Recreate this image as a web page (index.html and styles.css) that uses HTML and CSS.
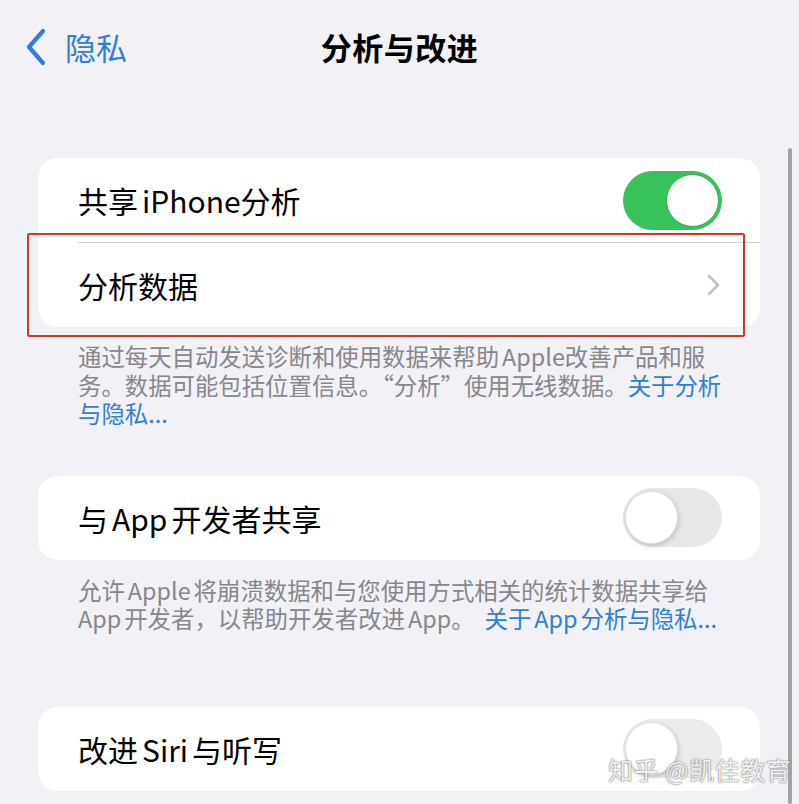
FILE: index.html
```html
<!DOCTYPE html>
<html lang="zh-CN">
<head>
<meta charset="utf-8">
<title>分析与改进</title>
<link rel="stylesheet" href="styles.css">
</head>
<body>
<div class="screen">
  <header class="nav">
    <div class="back">
      <svg class="back-icon" width="22" height="38" viewBox="0 0 22 38"><polyline points="18,3 4,19 18,35" fill="none" stroke="#2f7fd6" stroke-width="4.2" stroke-linecap="round" stroke-linejoin="round"/></svg>
      <span class="back-label">隐私</span>
    </div>
    <h1 class="title">分析与改进</h1>
  </header>

  <main class="content">
    <section class="card card-first">
      <div class="row">
        <span class="row-label">共享<span class="gap"></span>iPhone分析</span>
        <span class="toggle toggle-on"><span class="knob"></span></span>
      </div>
      <div class="sep"></div>
      <div class="row">
        <span class="row-label">分析数据</span>
        <svg class="chev" width="14" height="22" viewBox="0 0 14 22"><polyline points="3,2 12,11 3,20" fill="none" stroke="#c3c3c7" stroke-width="2.6" stroke-linecap="round" stroke-linejoin="round"/></svg>
      </div>
      <div class="highlight"></div>
    </section>
    <p class="foot foot-first">
      <span class="line">通过每天自动发送诊断和使用数据来帮助<span class="gap"></span>Apple改善产品和服</span>
      <span class="line">务。数据可能包括位置信息。“分析”使用无线数据。<span class="link">关于分析</span></span>
      <span class="line link">与隐私...</span>
    </p>

    <section class="card card-second">
      <div class="row">
        <span class="row-label">与<span class="gap"></span>App<span class="gap"></span>开发者共享</span>
        <span class="toggle toggle-off"><span class="knob"></span></span>
      </div>
    </section>
    <p class="foot foot-second">
      <span class="line">允许<span class="gap"></span>Apple<span class="gap"></span>将崩溃数据和与您使用方式相关的统计数据共享给</span>
      <span class="line">App<span class="gap"></span>开发者，以帮助开发者改进<span class="gap"></span>App。<span class="link link-gap">关于<span class="gap"></span>App<span class="gap"></span>分析与隐私...</span></span>
    </p>

    <section class="card card-third">
      <div class="row">
        <span class="row-label">改进<span class="gap"></span>Siri<span class="gap"></span>与听写</span>
        <span class="toggle toggle-off toggle-faded"><span class="knob"></span></span>
      </div>
    </section>
  </main>

  <div class="scrollbar"></div>
  <div class="watermark">知乎 @凯佳教育</div>
</div>
</body>
</html>
```

FILE: styles.css
```css
html, body {
  margin: 0;
  padding: 0;
}
body {
  background: #f1f1f6;
  font-family: "Noto Sans CJK SC", "Noto Sans", "Liberation Sans", sans-serif;
  color: #000;
}
.screen {
  position: relative;
  width: 799px;
  height: 804px;
  overflow: hidden;
}
.nav {
  position: relative;
  height: 96px;
  display: flex;
  align-items: center;
  justify-content: center;
}
.back {
  position: absolute;
  left: 25px;
  top: 28px;
  display: flex;
  align-items: center;
  gap: 18px;
}
.back-label {
  font-size: 31px;
  line-height: 38px;
  color: #2f7fd6;
}
.title {
  margin: 0;
  font-size: 31px;
  font-weight: 700;
  line-height: 38px;
  letter-spacing: 0.5px;
  margin-top: -2px;
}
.content {
  padding: 62px 39px 0 38px;
  display: flex;
  flex-direction: column;
}
.card {
  position: relative;
  background: #fff;
  border-radius: 20px;
}
.row {
  height: 84px;
  padding: 0 38px 0 40px;
  display: flex;
  align-items: center;
  justify-content: space-between;
}
.row-label {
  font-size: 30px;
  line-height: 40px;
}
.gap {
  display: inline-block;
  width: 4px;
}
.sep {
  height: 1px;
  margin-left: 40px;
  background: #d2d2d6;
}
.chev {
  margin-right: 2px;
}
.toggle {
  position: relative;
  width: 99px;
  height: 59px;
  border-radius: 30px;
  box-sizing: border-box;
}
.toggle .knob {
  position: absolute;
  top: 3px;
  width: 53px;
  height: 53px;
  border-radius: 50%;
  background: #fff;
  box-sizing: border-box;
}
.toggle-on {
  background: #38c25a;
}
.toggle-on .knob {
  right: 3px;
  border: 1.5px solid #2fa84e;
}
.toggle-off {
  background: #e8e8ea;
}
.toggle-off .knob {
  left: 2px;
  box-shadow: 1px 2px 5px rgba(0, 0, 0, 0.18);
  border: 1px solid #e2e2e4;
}
.toggle-faded {
  background: #ececee;
}
.highlight {
  position: absolute;
  left: -11px;
  top: 75px;
  width: 718px;
  height: 104px;
  border: 2px solid #d6342c;
  border-radius: 2px;
  box-sizing: border-box;
  pointer-events: none;
}
.foot {
  margin: 0;
  padding: 0 0 0 40px;
  font-size: 23.4px;
  line-height: 28.5px;
  color: #87878c;
}
.foot .line {
  display: block;
  white-space: nowrap;
}
.foot .gap {
  width: 3px;
}
.link {
  color: #2f7fd6;
}
.link-gap {
  margin-left: 10px;
}
.foot-first {
  margin-top: 15px;
}
.card-second {
  margin-top: 48px;
}
.foot-second {
  margin-top: 16px;
}
.card-third {
  margin-top: 74px;
}
.scrollbar {
  position: absolute;
  left: 788px;
  top: 148px;
  width: 4px;
  bottom: 0;
  background: #a3a3a7;
  border-radius: 2px;
}
.watermark {
  position: absolute;
  left: 608px;
  top: 750px;
  font-size: 25px;
  line-height: 38px;
  color: rgba(255, 255, 255, 0.92);
  text-shadow: 0 0 1px #6c6c70, 0 0 2px rgba(0, 0, 0, 0.45);
  letter-spacing: 0.5px;
}
```
